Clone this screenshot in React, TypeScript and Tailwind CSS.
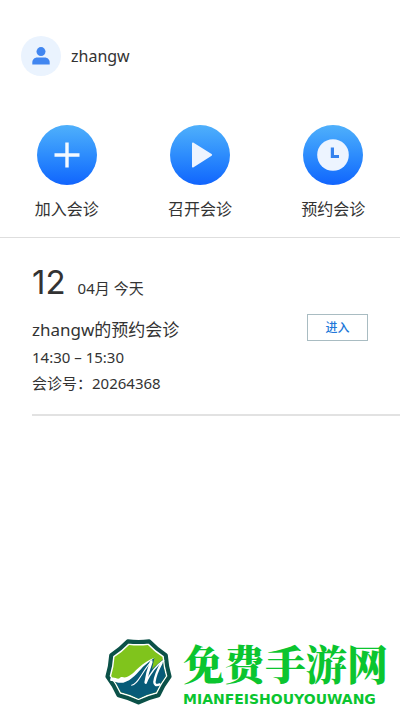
import type { ReactNode } from "react";

const meeting = {
  day: "12",
  month: "04月",
  label: "今天",
  title: "zhangw的预约会诊",
  time: "14:30 – 15:30",
  code: "20264368",
};

// nine-sided badge outline with slightly hollow edges
const badge =
  "M100 189Q128 175 158 168Q171 139 190 114Q181 84 179 52Q153 35 131 12Q100 16 69 12Q47 35 21 52Q19 84 10 114Q29 139 42 168Q72 175 100 189Z";

function ActionButton({ label, children }: { label: string; children: ReactNode }) {
  return (
    <button type="button" className="flex flex-col items-center gap-3">
      <span className="flex size-15 items-center justify-center rounded-full bg-linear-to-b from-[#4fb0fb] to-[#1264fd]">
        {children}
      </span>
      <span className="text-base leading-6 text-[#333]">{label}</span>
    </button>
  );
}

function UserIcon() {
  return (
    <svg viewBox="0 0 18 18" className="size-[18px]" fill="#4186f0" aria-hidden="true">
      <circle cx="9" cy="4.6" r="4.5" />
      <path d="M0.3 17.6v-1.8c0-3 2-5.2 5-5.2h7.4c3 0 5 2.2 5 5.2v1.8z" />
    </svg>
  );
}

function BrandLogo() {
  return (
    <svg viewBox="0 0 200 196" className="h-[68px] w-[69px] shrink-0" aria-hidden="true">
      <defs>
        <clipPath id="badge-inner">
          <path d={badge} transform="translate(12 12) scale(0.88)" />
        </clipPath>
      </defs>
      <path d={badge} fill="#fff" stroke="#0b5148" strokeWidth="12" strokeLinejoin="round" />
      <g clipPath="url(#badge-inner)">
        <rect width="200" height="196" fill="#80c41c" />
        <path
          d="M0 126C24 120 30 130 46 130C62 130 74 120 84 112C106 94 120 74 146 60L139 92L174 62L200 58V196H0Z"
          fill="#075b78"
        />
      </g>
      {/* wave running into the upstroke */}
      <path
        d="M18 120C28 112 35 122 44 120C50 113 55 116 60 117C78 114 89 98 102 87C116 75 129 66 147 59C136 67 124 76 113 86C97 104 80 126 56 132C40 134 32 128 18 126Z"
        fill="#fff"
      />
      <g fill="none" stroke="#fff" strokeLinecap="round" strokeLinejoin="round">
        <path d="M80 139C98 138 107 104 139 68" strokeWidth="3" />
        <path d="M137 72C129 92 124 110 121 131" strokeWidth="8" />
        <path d="M121 133C132 108 148 84 173 67" strokeWidth="4" />
        <path d="M167 74C154 98 148 114 146 130C146 138 151 141 161 137" strokeWidth="7" />
      </g>
    </svg>
  );
}

export default function App() {
  return (
    <div className="flex min-h-screen flex-col bg-white font-['Noto_Sans','Noto_Sans_CJK_SC',sans-serif] text-[#333]">
      <header className="flex items-center gap-2.5 px-[21px] pt-9">
        <span className="flex size-10 items-center justify-center rounded-full bg-[#eaf3fe]">
          <UserIcon />
        </span>
        <span className="text-base leading-6">zhangw</span>
      </header>

      <nav className="mt-[49px] grid grid-cols-3 border-b border-[#dedede] pb-4">
        <ActionButton label="加入会诊">
          <svg viewBox="0 0 26 26" className="size-[26px]" fill="#f4f9ff" aria-hidden="true">
            <path d="M11.3 0.5h3.4v10.8h10.8v3.4H14.7v10.8h-3.4V14.7H0.5v-3.4h10.8z" />
          </svg>
        </ActionButton>
        <ActionButton label="召开会诊">
          <svg viewBox="0 0 26 26" className="size-[26px]" fill="#edf4ff" aria-hidden="true">
            <path d="M5 1.6c0-1 .8-1.4 1.6-.9l18 11.3c.7.5.7 1.2 0 1.7l-18 11.6c-.8.5-1.6.1-1.6-.9z" />
          </svg>
        </ActionButton>
        <ActionButton label="预约会诊">
          <svg viewBox="0 0 32 32" className="size-8" aria-hidden="true">
            <circle cx="16" cy="16" r="15.8" fill="#edf4ff" />
            <path d="M13.8 8.5h3.2v7.6h5v3h-8.2z" fill="#3582ee" />
          </svg>
        </ActionButton>
      </nav>

      <main className="ml-8">
        <section className="border-b-2 border-[#e2e2e2] pt-6 pb-[18px]">
          <h2 className="flex items-baseline gap-3">
            <span className="font-['Inter',sans-serif] text-[33px] leading-10">{meeting.day}</span>
            <span className="text-[15px]">
              {meeting.month} {meeting.label}
            </span>
          </h2>
          <div className="mt-3 flex items-start justify-between pr-8">
            <div>
              <h3 className="pt-0.5 text-[17px] leading-7">{meeting.title}</h3>
              <p className="text-[15px] leading-[26px]">{meeting.time}</p>
              <p className="text-[15px] leading-[26px]">会诊号：{meeting.code}</p>
            </div>
            <button
              type="button"
              className="h-[27px] w-[61px] border border-[#a9bcc2] text-xs font-medium text-[#2277d8]"
            >
              进入
            </button>
          </div>
        </section>
      </main>

      <footer className="mt-auto flex items-center justify-end gap-2.5 pr-3 pb-1">
        <BrandLogo />
        <div className="text-[#0bc52f]">
          <p className="font-['Noto_Serif_CJK_SC','Noto_Sans_CJK_SC',serif] text-[41px] leading-14 font-black">
            免费手游网
          </p>
          <p className="font-['DejaVu_Sans',sans-serif] text-sm leading-4 font-bold">MIANFEISHOUYOUWANG</p>
        </div>
      </footer>
    </div>
  );
}
